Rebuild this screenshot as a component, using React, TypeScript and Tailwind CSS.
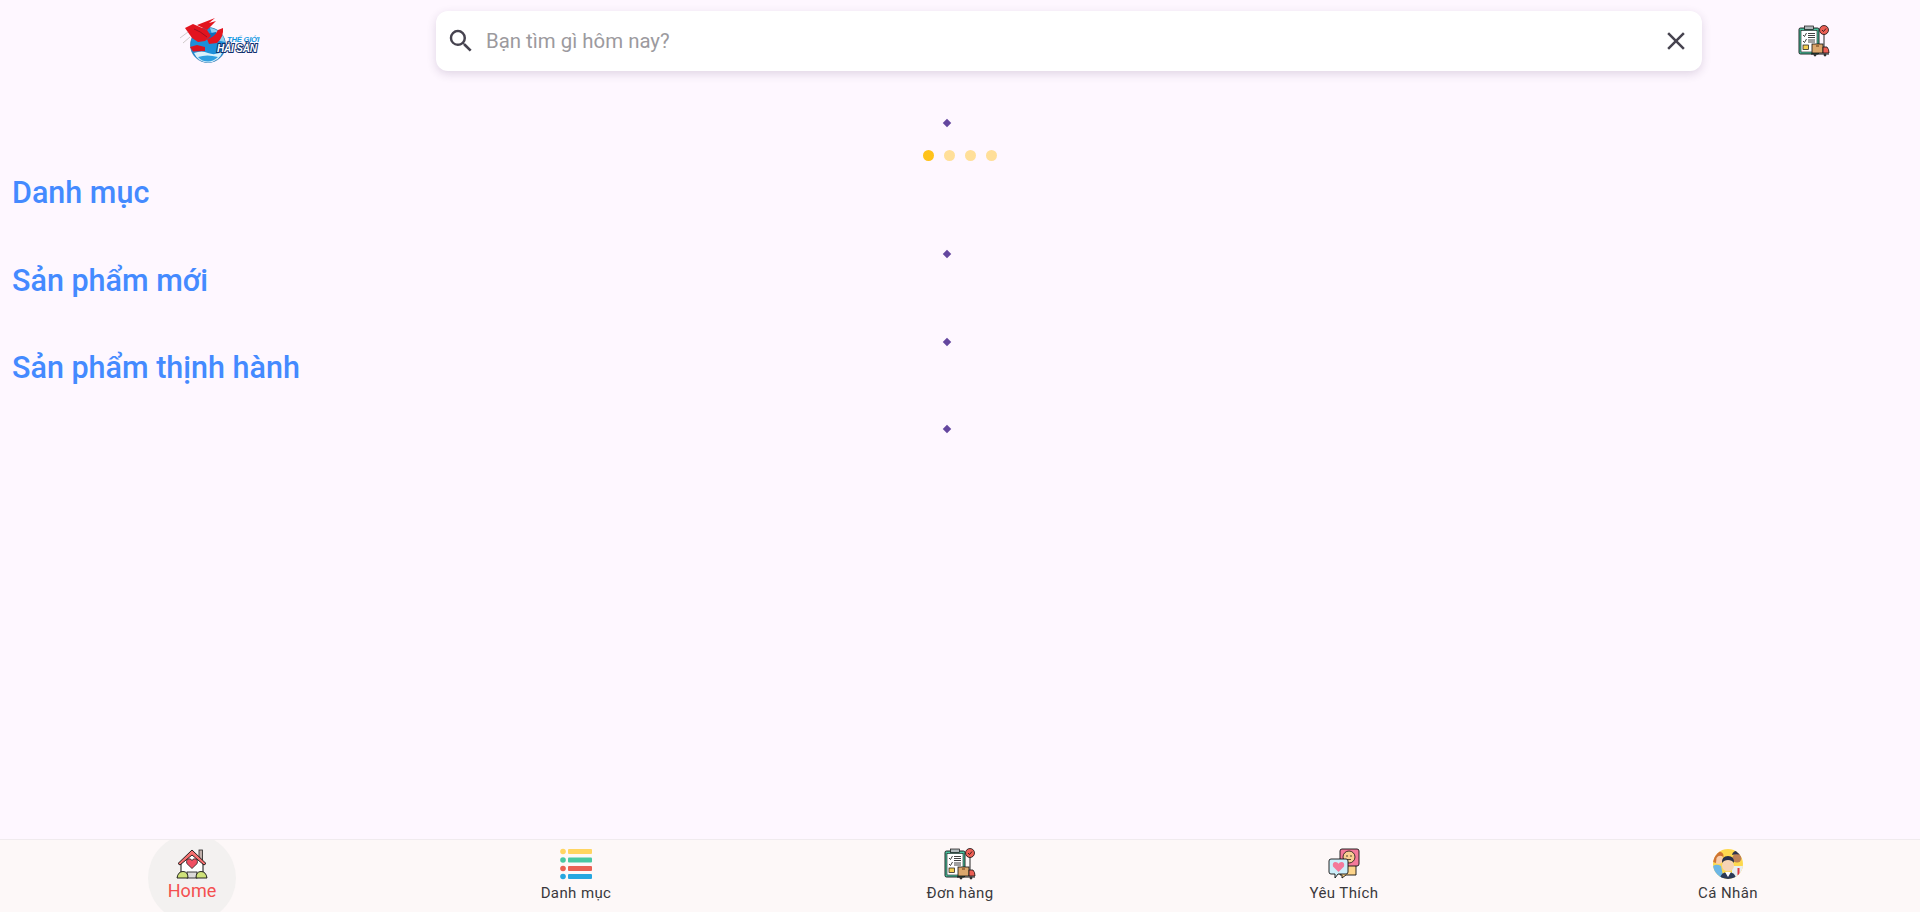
import { MdSearch, MdClose } from 'react-icons/md';

const Logo = () => (
  <svg width="80" height="46" viewBox="0 0 80 46" className="block">
    <path d="M0 20 L8 14 M3 25 L10 19" stroke="#cfcaca" strokeWidth="1" />
    <circle cx="28" cy="27" r="17.5" fill="#1d8fd9" stroke="#0f5f9c" strokeWidth="0.6" />
    <path d="M30 10 a17 17 0 0 1 15 14 L36 22 L32 16 Z" fill="#8fd0f0" />
    <path d="M14 35 Q22 32 28 35 Q36 38 43 33 Q39 44 28 44.5 Q18 44 14 35 Z" fill="#d9f1fb" />
    <path d="M18 39 Q27 36 38 39 Q33 43.5 28 43.5 Q22 43.5 18 39 Z" fill="#2f9fe0" />
    <path d="M26 16 L36 14 L38 22 L30 24 Z" fill="#0b6fbe" />
    <path d="M5 10 L13 6 L27 12 L31 18 L25 23 L18 24 L12 20 Z" fill="#e2141f" />
    <path d="M17 7 L35 0 L29 5 L36 3 L27 12 Z" fill="#e2141f" />
    <path d="M10 29 L17 27 L25 29 L25 33 L13 33.5 Z" fill="#d9141f" />
    <path d="M27 21 Q34 20 38 12 L43 10 Q44 19 37 25 L29 26 Z" fill="#e2141f" />
    <path d="M14 11 Q20 13 27 19" stroke="#8a1020" strokeWidth="0.8" fill="none" />
    <text x="47" y="24" fontFamily="'Liberation Sans', sans-serif" fontSize="7.6" fontWeight="700" fontStyle="italic" fill="#1199e2" letterSpacing="-0.2">THẾ GIỚI</text>
    <text x="37" y="34" fontFamily="'Liberation Sans', sans-serif" fontSize="10" fontWeight="700" fontStyle="italic" fill="#ffffff" stroke="#10306e" strokeWidth="2" paintOrder="stroke" letterSpacing="-0.2">HẢI SẢN</text>
  </svg>
);

const HomeIcon = () => (
  <svg width="32" height="32" viewBox="0 0 32 32" className="block">
    <rect x="23" y="2" width="3.5" height="10" fill="#c0afaa" stroke="#222" strokeWidth="0.8" />
    <path d="M5 15 L16 5 L27 15 V28 H5 Z" fill="#fff" stroke="#111" strokeWidth="1" />
    <path d="M2 15.5 L16 2 L30 15.5 L28 17 L16 7 L4 17 Z" fill="#f5706f" stroke="#111" strokeWidth="0.9" strokeLinejoin="round" />
    <path d="M16 20.5 L10.8 15.5 Q9.8 10.8 13.2 10.8 Q15.4 10.8 16 12.6 Q16.6 10.8 18.8 10.8 Q22.2 10.8 21.2 15.5 Z" fill="#f04f62" stroke="#222" strokeWidth="0.8" />
    <rect x="11" y="24" width="10" height="6" fill="#dcdada" stroke="#111" strokeWidth="0.8" />
    <path d="M1 30 Q2 23.5 7 23.5 Q12 23.5 12 30 Z" fill="#cfe27a" stroke="#111" strokeWidth="0.9" />
    <path d="M20 30 Q20 23.5 25 23.5 Q30 23.5 31 30 Z" fill="#cfe27a" stroke="#111" strokeWidth="0.9" />
  </svg>
);

const ListIcon = () => (
  <svg width="32" height="32" viewBox="0 0 32 32" className="block">
    <circle cx="3" cy="3.5" r="2.8" fill="#ffd561" />
    <rect x="8" y="1" width="24" height="5" rx="1" fill="#ffd561" />
    <circle cx="3" cy="12" r="2.8" fill="#48c8a3" />
    <rect x="8" y="9.5" width="24" height="5" rx="1" fill="#48c8a3" />
    <circle cx="3" cy="20.5" r="2.8" fill="#ea6153" />
    <rect x="8" y="18" width="24" height="5" rx="1" fill="#ea6153" />
    <circle cx="3" cy="28.5" r="2.8" fill="#27a7e0" />
    <rect x="8" y="26" width="24" height="5" rx="1" fill="#27a7e0" />
  </svg>
);

const OrderIcon = () => (
  <svg width="32" height="32" viewBox="0 0 32 32" className="block">
    <rect x="1" y="3" width="20" height="26" rx="1.5" fill="#4cc3a0" stroke="#111" strokeWidth="0.9" />
    <rect x="3" y="5.5" width="16" height="21.5" fill="#fff" stroke="#111" strokeWidth="0.6" />
    <rect x="6.5" y="1" width="9" height="3.5" fill="#b0b8bb" stroke="#111" strokeWidth="0.7" />
    <path d="M5 10 L6.5 11.5 L8.5 8 M5 16 L6.5 17.5 L8.5 14" stroke="#111" strokeWidth="0.8" fill="none" />
    <path d="M10 8.5 H17 M10 10.5 H17 M10 12.5 H17 M10 15 H17 M10 17 H17" stroke="#111" strokeWidth="0.8" />
    <rect x="5" y="20" width="5.5" height="4.5" fill="#f5cd52" stroke="#111" strokeWidth="0.7" />
    <path d="M26 8 V22" stroke="#111" strokeWidth="0.9" />
    <circle cx="26" cy="5" r="4.5" fill="#ec5f55" stroke="#111" strokeWidth="0.8" />
    <path d="M24 5 L25.5 6.5 L28 3.5" stroke="#111" strokeWidth="0.8" fill="none" />
    <rect x="14" y="19" width="11" height="9" fill="#dba76d" stroke="#111" strokeWidth="0.8" />
    <rect x="18" y="19" width="3" height="3" fill="#a06e3e" />
    <path d="M25 22 H29 Q31 24 31 28 H25 Z" fill="#ec5f55" stroke="#111" strokeWidth="0.8" />
    <path d="M13 29 H31" stroke="#111" strokeWidth="1" />
    <circle cx="17" cy="30" r="1.4" fill="#333" />
    <circle cx="27" cy="30" r="1.4" fill="#333" />
  </svg>
);

const FavIcon = () => (
  <svg width="32" height="32" viewBox="0 0 32 32" className="block">
    <path d="M14 16 H28 V27 H18 L14 30 V27 H12 Z" fill="#fdd48a" stroke="#111" strokeWidth="0.9" />
    <rect x="12" y="1" width="19" height="17" rx="2" fill="#f4799a" stroke="#111" strokeWidth="0.9" />
    <circle cx="21" cy="9" r="6" fill="#f9cf91" stroke="#111" strokeWidth="0.8" />
    <circle cx="19" cy="8" r="0.7" fill="#111" />
    <circle cx="23" cy="8" r="0.7" fill="#111" />
    <path d="M19 11.5 H23" stroke="#111" strokeWidth="0.7" />
    <path d="M3 11 H18 Q20 11 20 13 V24 Q20 26 18 26 H10 L7 30 V26 H3 Q1 26 1 24 V13 Q1 11 3 11 Z" fill="#cdeefa" stroke="#111" strokeWidth="0.9" />
    <path d="M10.5 24 L5 18.5 Q4 14 7.5 14 Q9.7 14 10.5 15.8 Q11.3 14 13.5 14 Q17 14 16 18.5 Z" fill="#f4799a" />
  </svg>
);

const ProfileIcon = () => (
  <svg width="32" height="32" viewBox="0 0 32 32" className="block">
    <defs>
      <clipPath id="profile-clip">
        <circle cx="16" cy="16" r="15" />
      </clipPath>
    </defs>
    <g clipPath="url(#profile-clip)">
      <rect width="32" height="32" fill="#fdd94e" />
      <path d="M0 19 Q4 15 9 18 L12 32 H0 Z" fill="#6cb7e6" />
      <circle cx="6.5" cy="11.5" r="4.5" fill="#f8cdaa" />
      <path d="M1 14 Q0 3 7 3.5 Q12 4 11.5 9 Q7 6 4.5 10 L4 15 Z" fill="#cf7434" />
      <path d="M20 18 H32 V32 H20 Z" fill="#e8eef1" />
      <path d="M25.5 20 L27.5 20 L27.5 27 L26.5 28.5 L25.5 27 Z" fill="#e0393e" />
      <circle cx="25" cy="10" r="4.5" fill="#bd8156" />
      <path d="M20 7 Q21 2 27 2.5 Q31 3.5 30 7.5 Q25 5.5 20 7 Z" fill="#2d3450" />
      <path d="M8 32 Q8 24 16 24 Q24 24 24 32 Z" fill="#2c3a57" />
      <path d="M13 24 L16 29 L19 24 Z" fill="#fff" />
      <circle cx="16" cy="17.5" r="6" fill="#f7d4b4" />
      <path d="M10 15 Q9.5 8 16 8 Q22.5 8 22 15 Q20 12 16 12 Q12 12 10 15 Z" fill="#27304a" />
    </g>
  </svg>
);

const Diamond = ({ className = '' }: { className?: string }) => (
  <div className={`ml-[-27px] h-[6px] w-[6px] self-center rotate-45 bg-[#64469f] ${className}`} />
);

const navItems = [
  { label: 'Danh mục', icon: <ListIcon /> },
  { label: 'Đơn hàng', icon: <OrderIcon /> },
  { label: 'Yêu Thích', icon: <FavIcon /> },
  { label: 'Cá Nhân', icon: <ProfileIcon /> },
];

export default function App() {
  return (
    <div className="flex h-[912px] w-full flex-col overflow-hidden bg-[#fef7ff] font-['Roboto',sans-serif]">
      {/* top bar */}
      <header className="flex h-[82px] shrink-0 items-start">
        <div className="flex w-[436px] justify-start pl-[180px] pt-[18px]">
          <Logo />
        </div>
        <div className="mt-[11px] flex h-[60px] w-[1266px] items-center rounded-xl bg-white pl-[10px] pr-[11px] shadow-[0_3px_10px_rgba(60,40,90,0.16)]">
          <MdSearch size={30} className="text-[#46434f]" />
          <span className="ml-[10px] flex-1 text-[20.4px] text-[#9c9a9e]">Bạn tìm gì hôm nay?</span>
          <MdClose size={30} className="text-[#46434f]" />
        </div>
        <div className="ml-[96px] pt-[25px]">
          <OrderIcon />
        </div>
      </header>

      {/* page body, everything below is still loading */}
      <main className="flex flex-1 flex-col">
        <Diamond className="mt-[38px]" />
        <div className="mt-[24px] flex justify-center gap-[10px]">
          <div className="h-[11px] w-[11px] rounded-full bg-[#ffc21a]" />
          <div className="h-[11px] w-[11px] rounded-full bg-[#ffdf99]" />
          <div className="h-[11px] w-[11px] rounded-full bg-[#ffdf99]" />
          <div className="h-[11px] w-[11px] rounded-full bg-[#ffdf99]" />
        </div>
        <h2 className="ml-3 mt-[10px] text-[30.5px] leading-[44px] font-medium text-[#448aff]">Danh mục</h2>
        <Diamond className="mt-[36px]" />
        <h2 className="ml-3 mt-[1.5px] text-[30.5px] leading-[44px] font-medium text-[#448aff]">Sản phẩm mới</h2>
        <Diamond className="mt-[36px]" />
        <h2 className="ml-3 mt-[1.5px] text-[30.5px] leading-[44px] font-medium text-[#448aff]">Sản phẩm thịnh hành</h2>
        <Diamond className="mt-[36px]" />
      </main>

      {/* bottom navigation */}
      <nav className="relative grid h-[73px] shrink-0 grid-cols-5 overflow-hidden border-t border-[#f0ebee] bg-[#fdf8f8]">
        <div className="relative flex flex-col items-center">
          <div className="absolute left-[148px] top-[-6px] h-[88px] w-[88px] rounded-full bg-[#f3f1f0]" />
          <div className="relative mt-[8px]">
            <HomeIcon />
          </div>
          <span className="relative mt-[-1px] text-lg leading-[24px] text-[#f44f4f]">Home</span>
        </div>
        {navItems.map((item) => (
          <div key={item.label} className="flex flex-col items-center">
            <div className="mt-[8px]">{item.icon}</div>
            <span className="mt-[2px] text-[15px] leading-[22px] tracking-[0.4px] text-[#3a383c]">{item.label}</span>
          </div>
        ))}
      </nav>
    </div>
  );
}
